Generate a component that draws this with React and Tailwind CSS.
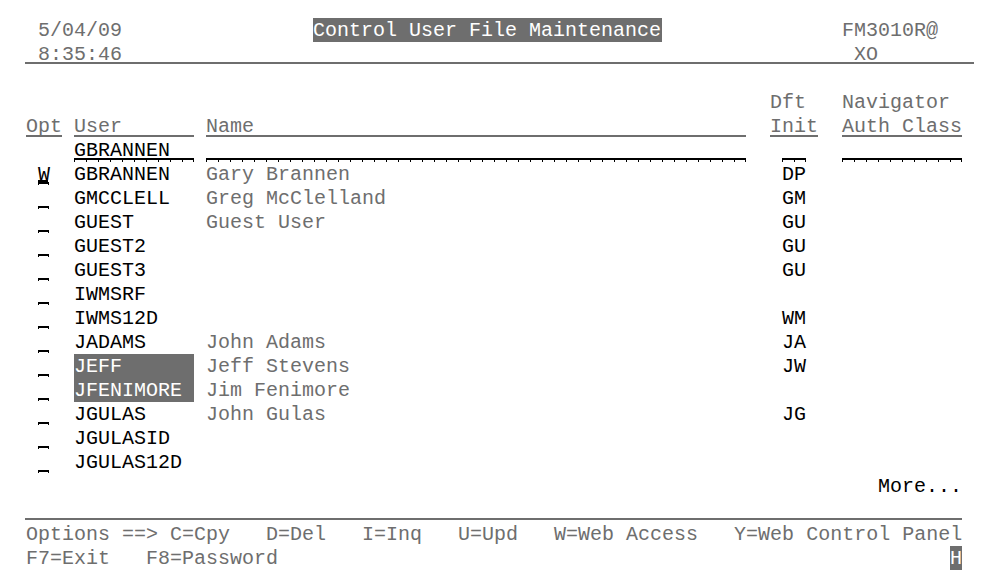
import React from "react";

const users = [
  ["GBRANNEN", "Gary Brannen", "DP", "W"],
  ["GMCCLELL", "Greg McClelland", "GM"],
  ["GUEST", "Guest User", "GU"],
  ["GUEST2", "", "GU"],
  ["GUEST3", "", "GU"],
  ["IWMSRF", "", ""],
  ["IWMS12D", "", "WM"],
  ["JADAMS", "John Adams", "JA"],
  ["JEFF", "Jeff Stevens", "JW", "", true],
  ["JFENIMORE", "Jim Fenimore", "", "", true],
  ["JGULAS", "John Gulas", "JG"],
  ["JGULASID", "", ""],
  ["JGULAS12D", "", ""],
];

function Row({ children }) {
  return (
    <div className="grid h-[24px] grid-cols-[repeat(82,12px)] grid-rows-[24px]">
      {children}
    </div>
  );
}

function Ticks({ n }) {
  return (
    <div className="flex h-[4px] border-t-2 border-black">
      {Array.from({ length: n }).map((_, i) => (
        <div
          key={i}
          className={
            i === n - 1
              ? "h-[2px] w-[12px] border-x border-black"
              : "h-[2px] w-[12px] border-l border-black"
          }
        />
      ))}
    </div>
  );
}

export default function App() {
  return (
    <div className="h-[586px] w-[985px] overflow-hidden bg-white pl-[2px] pt-[18px] font-['Liberation_Mono',monospace] text-[20px] leading-[26px] text-[#6e6e6e]">
      {/* Row 0 */}
      <Row>
        <div className="col-[4/span_7] row-start-1 whitespace-pre">5/04/09</div>
        <div className="col-[27/span_29] row-start-1 -ml-px h-[24px] whitespace-pre bg-[#6e6e6e] text-white">
          Control User File Maintenance
        </div>
        <div className="col-[71/span_8] row-start-1 whitespace-pre">FM3010R@</div>
      </Row>
      {/* Row 1 */}
      <Row>
        <div className="col-[3/span_79] row-start-1 -ml-px h-[22px] border-b-2 border-[#6e6e6e]" />
        <div className="col-[4/span_7] row-start-1 whitespace-pre">8:35:46</div>
        <div className="col-[72/span_2] row-start-1 whitespace-pre">XO</div>
      </Row>
      {/* Row 2 */}
      <Row />
      {/* Row 3 */}
      <Row>
        <div className="col-[65/span_3] row-start-1 whitespace-pre">Dft</div>
        <div className="col-[71/span_9] row-start-1 whitespace-pre">Navigator</div>
      </Row>
      {/* Row 4 */}
      <Row>
        <div className="col-[3/span_3] row-start-1 h-[23px] border-b-2 border-[#6e6e6e] whitespace-pre">Opt</div>
        <div className="col-[7/span_10] row-start-1 h-[23px] border-b-2 border-[#6e6e6e] whitespace-pre">User</div>
        <div className="col-[18/span_45] row-start-1 h-[23px] border-b-2 border-[#6e6e6e] whitespace-pre">Name</div>
        <div className="col-[65/span_4] row-start-1 h-[23px] border-b-2 border-[#6e6e6e] whitespace-pre">Init</div>
        <div className="col-[71/span_10] row-start-1 h-[23px] border-b-2 border-[#6e6e6e] whitespace-pre">Auth Class</div>
      </Row>
      {/* Row 5 */}
      <Row>
        <div className="col-[7/span_10] row-start-1 flex flex-col">
          <div className="h-[20px] whitespace-pre text-black">GBRANNEN</div>
          <Ticks n={10} />
        </div>
        <div className="col-[18/span_45] row-start-1 flex flex-col">
          <div className="h-[20px]" />
          <Ticks n={45} />
        </div>
        <div className="col-[66/span_2] row-start-1 flex flex-col">
          <div className="h-[20px]" />
          <Ticks n={2} />
        </div>
        <div className="col-[71/span_10] row-start-1 flex flex-col">
          <div className="h-[20px]" />
          <Ticks n={10} />
        </div>
      </Row>
      {/* User rows */}
      {users.map(([id, name, init, opt, hl]) => (
        <Row key={id}>
          <div className="col-[4/span_1] row-start-1 flex flex-col items-start">
            <div className="h-[18px] w-[12px] whitespace-pre text-black">{opt || " "}</div>
            <div className={opt ? "h-[2px] w-[10px] bg-black" : "h-[2px] w-[10px]"} />
            <div className="h-[3px] w-[11px] border-x border-t-2 border-black" />
          </div>
          <div
            className={
              hl
                ? "col-[7/span_10] row-start-1 h-[24px] whitespace-pre bg-[#6e6e6e] text-white"
                : "col-[7/span_10] row-start-1 whitespace-pre text-black"
            }
          >
            {id}
          </div>
          <div className="col-[18/span_45] row-start-1 whitespace-pre">{name}</div>
          <div className="col-[66/span_2] row-start-1 whitespace-pre text-black">{init}</div>
        </Row>
      ))}
      {/* Row 19 */}
      <Row>
        <div className="col-[74/span_7] row-start-1 whitespace-pre text-black">More...</div>
      </Row>
      {/* Row 20 */}
      <Row>
        <div className="col-[3/span_78] row-start-1 -ml-px h-[22px] border-b-2 border-[#6e6e6e]" />
      </Row>
      {/* Row 21 */}
      <Row>
        <div className="col-[3/span_79] row-start-1 whitespace-pre">
          Options ==&gt; C=Cpy   D=Del   I=Inq   U=Upd   W=Web Access   Y=Web Control Panel
        </div>
      </Row>
      {/* Row 22 */}
      <Row>
        <div className="col-[3/span_21] row-start-1 whitespace-pre">F7=Exit   F8=Password</div>
        <div className="col-[80/span_1] row-start-1 h-[24px] whitespace-pre bg-[#6e6e6e] text-white">H</div>
      </Row>
    </div>
  );
}
